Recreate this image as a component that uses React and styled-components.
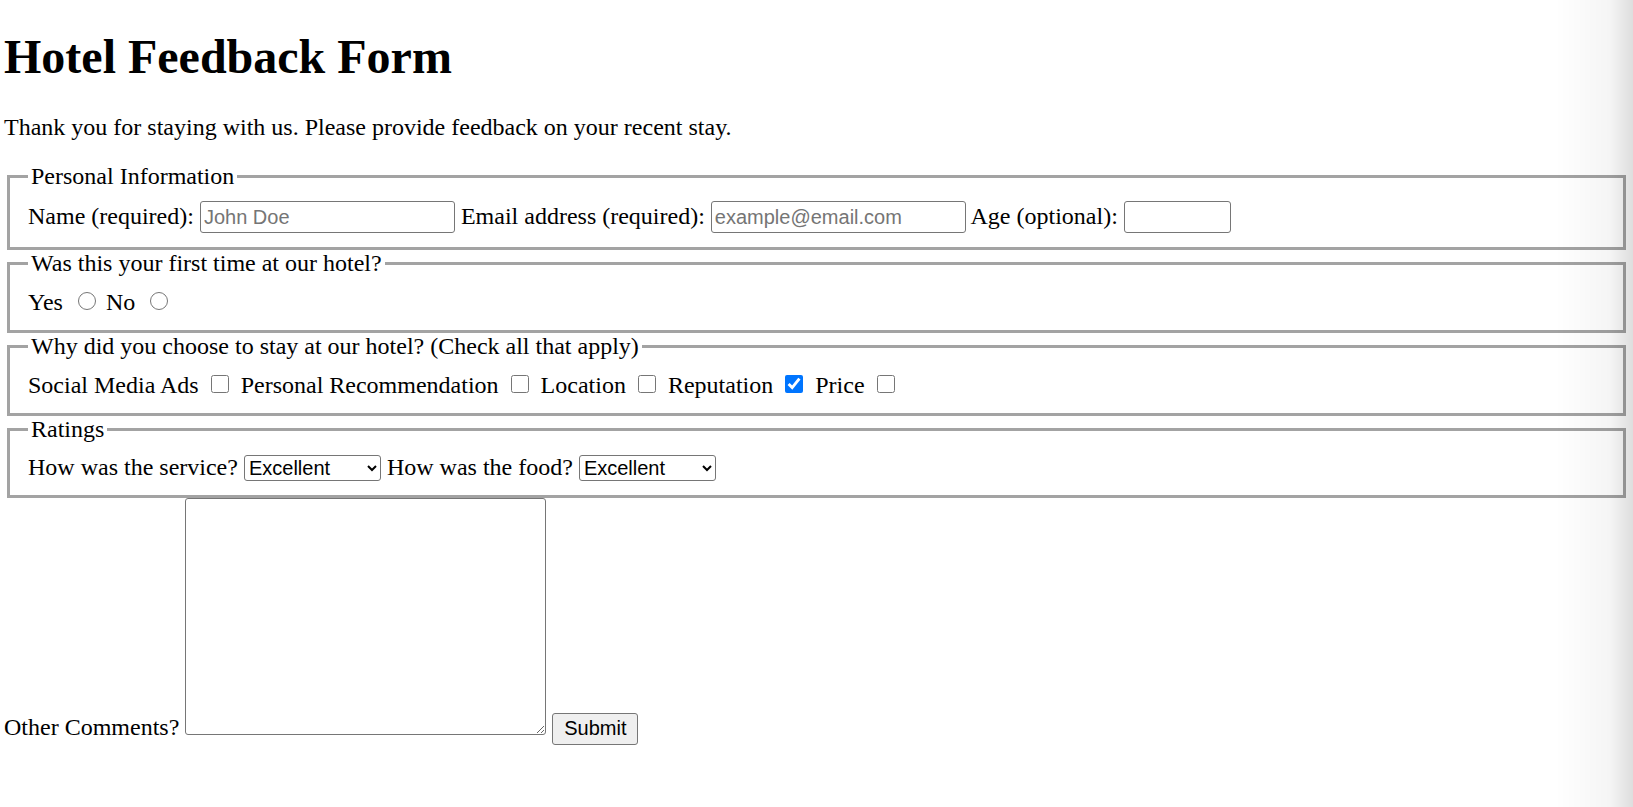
import styled, { createGlobalStyle } from "styled-components"

const GlobalStyle = createGlobalStyle`
  html, body {
    margin: 0;
    background: #fff;
  }

  body {
    font-family: "Liberation Serif", "Times New Roman", serif;
    font-size: 24px;
    line-height: normal;
    color: #000;
  }

  /* soft shade on the right edge of the capture */
  body::after {
    content: "";
    position: fixed;
    top: 0;
    right: 0;
    bottom: 0;
    width: 78px;
    pointer-events: none;
    background: linear-gradient(
      to right,
      rgba(0, 0, 0, 0) 0%,
      rgba(0, 0, 0, 0.04) 70%,
      rgba(0, 0, 0, 0.13) 100%
    );
  }
`

const Page = styled.main`
  padding: 0 4px;
`

const Title = styled.h1`
  margin: 29px 0 30px;
  font-size: 48px;
  font-weight: bold;
`

const Intro = styled.p`
  margin: 0 0 22px;
`

const Group = styled.fieldset`
  margin: 0 3px;
  padding: 11px 18px 14px;
  border: 3px solid #a3a3a3;
  min-inline-size: min-content;
`

const Caption = styled.legend`
  padding: 0 3px;
`

const TextInput = styled.input`
  box-sizing: border-box;
  width: ${(p) => (p.$narrow ? "107px" : "255px")};
  height: 32px;
  margin: 0;
  padding: 1px 3px;
  border: 1.5px solid #767676;
  border-radius: 3px;
  font-family: "Liberation Sans", Arial, sans-serif;
  font-size: 20px;
  color: #000;
  background: #fff;

  &::placeholder {
    color: #757575;
  }

  &::-webkit-inner-spin-button,
  &::-webkit-outer-spin-button {
    -webkit-appearance: none;
    margin: 0;
  }
`

const Radio = styled.input.attrs({ type: "radio" })`
  width: 18px;
  height: 18px;
  margin: 4px 4px 0 9px;
`

const Check = styled.input.attrs({ type: "checkbox" })`
  width: 18px;
  height: 18px;
  margin: 4px 6px 4px 6px;
`

const Picker = styled.select`
  box-sizing: border-box;
  width: 137px;
  height: 26px;
  margin: 0;
  border: 1.5px solid #767676;
  border-radius: 3px;
  font-family: "Liberation Sans", Arial, sans-serif;
  font-size: 20px;
  color: #000;
  background: #fff;
`

const CommentBox = styled.textarea`
  box-sizing: border-box;
  width: 361px;
  height: 237px;
  margin: 0 0 0 6px;
  border: 1.5px solid #767676;
  border-radius: 3px;
  font-family: "Liberation Mono", monospace;
  font-size: 20px;
  vertical-align: baseline;
`

const SubmitButton = styled.button`
  box-sizing: border-box;
  width: 86px;
  height: 32px;
  margin: 0;
  padding: 1px 9px;
  border: 1.5px solid #767676;
  border-radius: 3px;
  background: #efefef;
  font-family: "Liberation Sans", Arial, sans-serif;
  font-size: 20px;
  color: #000;
`

const reasons = [
  { label: "Social Media Ads", checked: false },
  { label: "Personal Recommendation", checked: false },
  { label: "Location", checked: false },
  { label: "Reputation", checked: true },
  { label: "Price", checked: false },
]

const Ratings = ["Excellent", "Good", "Average", "Poor"]

const App = () => {
  return (
    <>
      <GlobalStyle />
      <Page>
        <Title>Hotel Feedback Form</Title>
        <Intro>
          Thank you for staying with us. Please provide feedback on your recent
          stay.
        </Intro>
        <form onSubmit={(e) => e.preventDefault()}>
          {/* Personal details */}
          <Group>
            <Caption>Personal Information</Caption>
            <label>
              Name (required): <TextInput type="text" placeholder="John Doe" />
            </label>{" "}
            <label>
              Email address (required):{" "}
              <TextInput type="email" placeholder="example@email.com" />
            </label>{" "}
            <label>
              Age (optional): <TextInput type="number" $narrow />
            </label>
          </Group>

          {/* First visit */}
          <Group>
            <Caption>Was this your first time at our hotel?</Caption>
            <label>
              Yes <Radio name="first-time" value="yes" />
            </label>{" "}
            <label>
              No <Radio name="first-time" value="no" />
            </label>
          </Group>

          {/* Reasons */}
          <Group>
            <Caption>
              Why did you choose to stay at our hotel? (Check all that apply)
            </Caption>
            {reasons.map((r, i) => (
              <span key={r.label}>
                <label>
                  {r.label} <Check defaultChecked={r.checked} />
                </label>
                {i < reasons.length - 1 ? " " : ""}
              </span>
            ))}
          </Group>

          {/* Ratings */}
          <Group>
            <Caption>Ratings</Caption>
            <label>
              How was the service?{" "}
              <Picker defaultValue="Excellent">
                {Ratings.map((o) => (
                  <option key={o}>{o}</option>
                ))}
              </Picker>
            </label>{" "}
            <label>
              How was the food?{" "}
              <Picker defaultValue="Excellent">
                {Ratings.map((o) => (
                  <option key={o}>{o}</option>
                ))}
              </Picker>
            </label>
          </Group>

          <label>
            Other Comments?
            <CommentBox />
          </label>{" "}
          <SubmitButton type="submit">Submit</SubmitButton>
        </form>
      </Page>
    </>
  )
}

export default App
